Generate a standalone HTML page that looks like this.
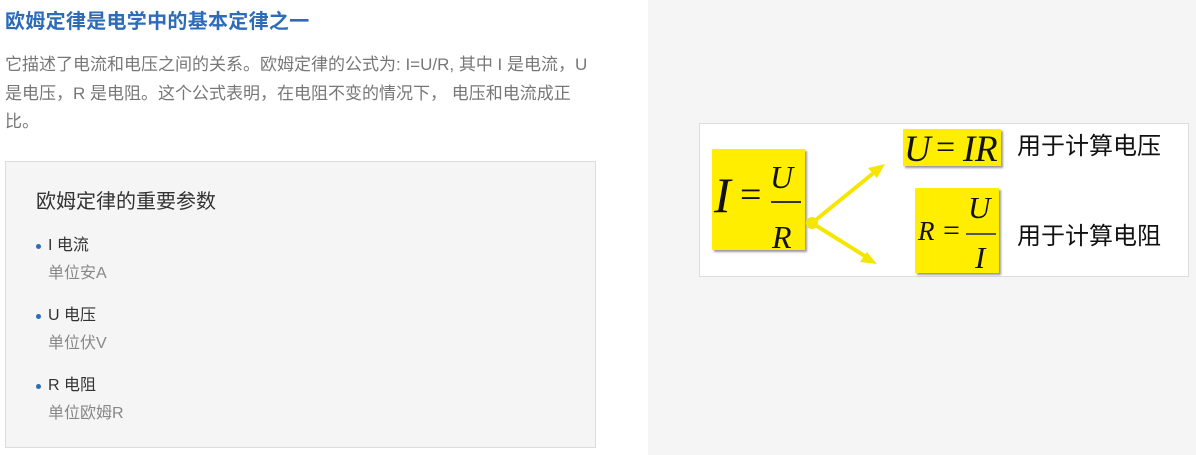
<!DOCTYPE html>
<html><head><meta charset="utf-8"><style>
*{margin:0;padding:0;box-sizing:border-box}
body{width:1196px;height:455px;overflow:hidden;background:#fff;font-family:"Liberation Sans","Noto Sans CJK SC",sans-serif;position:relative}
.right{position:absolute;left:648px;top:0;width:548px;height:455px;background:#f5f5f5}
h1{position:absolute;left:5px;top:9px;font-size:20px;font-weight:bold;color:#2e6cb8;line-height:26px;white-space:nowrap;letter-spacing:0.3px}
.p{position:absolute;left:5px;top:51px;width:600px;font-size:17px;line-height:28.5px;color:#777}
.box{position:absolute;left:5px;top:161px;width:591px;height:287px;background:#f5f5f5;border:1px solid #dcdcdc}
.box h2{position:absolute;left:30px;top:27px;font-size:20px;font-weight:normal;color:#333;line-height:26px;white-space:nowrap}
.it{position:absolute;left:42px;font-size:16px;color:#333;line-height:20px;white-space:nowrap}
.it:before{content:"";position:absolute;left:-12px;top:8px;width:5px;height:5px;border-radius:50%;background:#2e6cb8}
.sub{position:absolute;left:42px;font-size:16px;color:#888;line-height:20px;white-space:nowrap}
.img{position:absolute;left:699px;top:123px;width:490px;height:154px;background:#fff;border:1px solid #ddd}
.y{position:absolute;background:#ffee00;box-shadow:2px 2px 2px #999}
.m{font-family:"Liberation Serif",serif;font-style:italic;color:#111;position:absolute;white-space:nowrap;line-height:1}
.n{font-family:"Liberation Serif",serif;color:#111;position:absolute;line-height:1}
.cn{position:absolute;font-size:24px;color:#111;font-family:"Noto Sans CJK SC",sans-serif;line-height:1;white-space:nowrap}
</style></head><body>
<div class="right"></div>
<h1>欧姆定律是电学中的基本定律之一</h1>
<div class="p">它描述了电流和电压之间的关系。欧姆定律的公式为: I=U/R, 其中 I 是电流，U<br>是电压，R 是电阻。这个公式表明，在电阻不变的情况下， 电压和电流成正<br>比。</div>
<div class="box">
<h2>欧姆定律的重要参数</h2>
<div class="it" style="top:74px">I 电流</div><div class="sub" style="top:102px">单位安A</div>
<div class="it" style="top:144px">U 电压</div><div class="sub" style="top:172px">单位伏V</div>
<div class="it" style="top:214px">R 电阻</div><div class="sub" style="top:242px">单位欧姆R</div>
</div>
<div class="img">
 <div class="y" style="left:12px;top:25px;width:93px;height:101px"></div>
 <div class="m" style="left:14px;top:46px;font-size:50px">I</div>
 <div class="n" style="left:40px;top:52px;font-size:38px">=</div>
 <div class="m" style="left:70px;top:37px;font-size:32px">U</div>
 <div style="position:absolute;left:71px;top:77px;width:30px;height:2px;background:#333"></div>
 <div class="m" style="left:72px;top:97px;font-size:32px">R</div>

 <div class="y" style="left:203px;top:5px;width:98px;height:37px"></div>
 <div class="m" style="left:204px;top:7px;font-size:37px">U</div>
 <div class="n" style="left:236px;top:7px;font-size:34px">=</div>
 <div class="m" style="left:263px;top:7px;font-size:37px">I</div>
 <div class="m" style="left:275px;top:7px;font-size:37px">R</div>

 <div class="y" style="left:215px;top:64px;width:84px;height:85px"></div>
 <div class="m" style="left:218px;top:94px;font-size:27px">R</div>
 <div class="n" style="left:243px;top:92px;font-size:30px">=</div>
 <div class="m" style="left:268px;top:68px;font-size:31px">U</div>
 <div style="position:absolute;left:266px;top:109px;width:30px;height:1.5px;background:#555"></div>
 <div class="m" style="left:275px;top:118px;font-size:31px">I</div>

 <div class="cn" style="left:317px;top:8px">用于计算电压</div>
 <div class="cn" style="left:317px;top:98px">用于计算电阻</div>
 <svg style="position:absolute;left:0;top:0" width="490" height="154">
  <g stroke="#f5e600" stroke-width="4" fill="#f5e600">
   <line x1="112" y1="99" x2="176" y2="47"/>
   <line x1="112" y1="99" x2="168" y2="134"/>
   <circle cx="112" cy="99" r="6" stroke="none"/>
   <polygon points="185,40 168,44 177,54" stroke="none"/>
   <polygon points="177,140 160,138 167,128" stroke="none"/>
  </g>
 </svg>
</div>
</body></html>
